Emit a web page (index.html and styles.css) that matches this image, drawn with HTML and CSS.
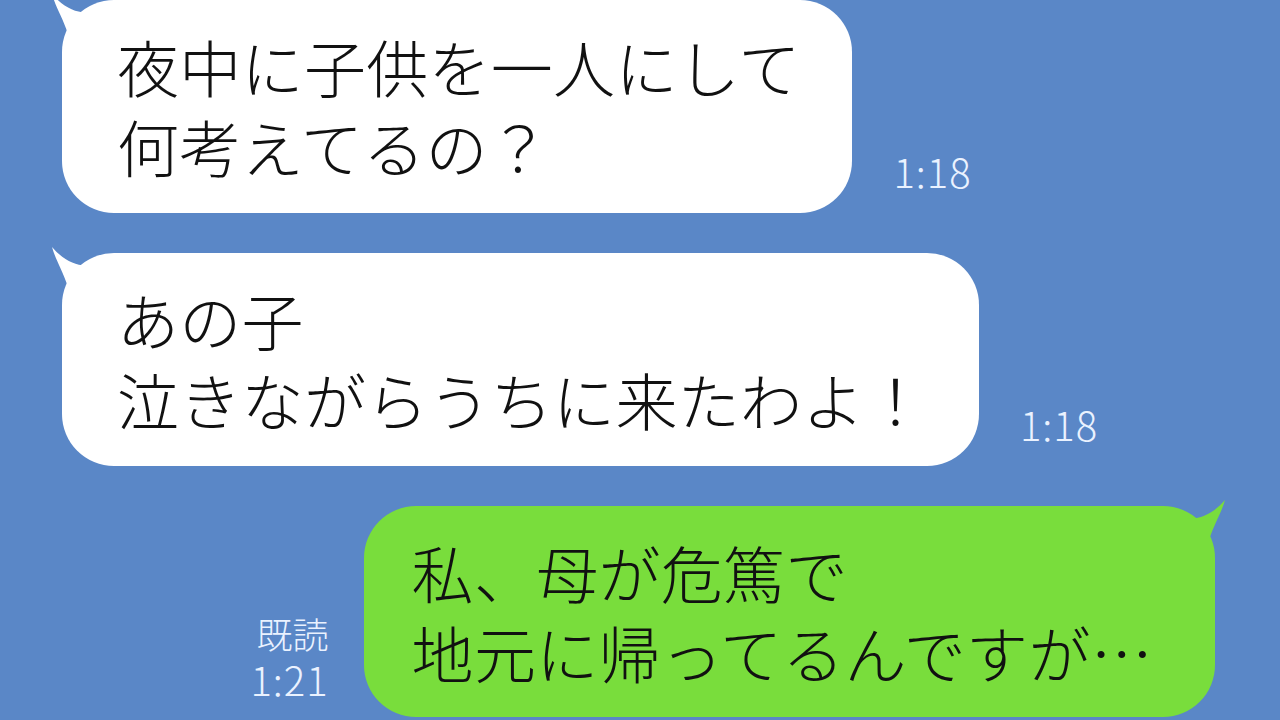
FILE: index.html
```html
<!DOCTYPE html>
<html lang="ja">
<head>
<meta charset="utf-8">
<link rel="stylesheet" href="styles.css">
</head>
<body>
<main class="chat">
  <div class="row row-in">
    <div class="bubble bubble-in">
      <svg class="tail tail-in" viewBox="0 0 40 40" width="40" height="40"><path d="M2 0 C6 14 12 22 18 40 L40 40 L40 18 C28 20 14 14 2 0 Z" fill="#fff"/></svg>
      <p class="msg">夜中に子供を一人にして<br>何考えてるの？</p>
    </div>
    <div class="meta"><span class="time">1:18</span></div>
  </div>
  <div class="row row-in">
    <div class="bubble bubble-in">
      <svg class="tail tail-in" viewBox="0 0 40 40" width="40" height="40"><path d="M2 0 C6 14 12 22 18 40 L40 40 L40 18 C28 20 14 14 2 0 Z" fill="#fff"/></svg>
      <p class="msg">あの子<br>泣きながらうちに来たわよ！</p>
    </div>
    <div class="meta"><span class="time">1:18</span></div>
  </div>
  <div class="row row-out">
    <div class="meta meta-out"><span class="read">既読</span><span class="time">1:21</span></div>
    <div class="bubble bubble-out">
      <svg class="tail tail-out" viewBox="0 0 40 40" width="40" height="40"><path d="M38 0 C34 14 28 22 22 40 L0 40 L0 18 C12 20 26 14 38 0 Z" fill="#79dd3c"/></svg>
      <p class="msg">私、母が危篤で<br>地元に帰ってるんですが…</p>
    </div>
  </div>
</main>
</body>
</html>
```
FILE: styles.css
```css
* { box-sizing: border-box; }
html, body {
  margin: 0;
  padding: 0;
  width: 1280px;
  height: 720px;
  overflow: hidden;
  background: #5a87c7;
  font-family: "Noto Sans CJK JP", "Noto Sans", sans-serif;
}
.chat {
  display: flex;
  flex-direction: column;
  gap: 40px;
}
.row {
  display: flex;
  align-items: flex-end;
}
.row-in { padding-left: 62px; }
.row-out {
  justify-content: flex-end;
  padding-right: 65px;
}
.bubble {
  position: relative;
  border-radius: 52px;
  padding: 26px 52px 27px 55px;
}
.bubble-in { background: #ffffff; }
.bubble-out {
  background: #79dd3c;
  padding: 26px 62px 25px 48px;
}
.msg {
  margin: 0;
  font-size: 62px;
  line-height: 80px;
  color: #111;
  white-space: nowrap;
  font-weight: 300;
  letter-spacing: 0.3px;
}
.tail {
  position: absolute;
  top: -6px;
}
.tail-in { left: -12px; }
.tail-out { right: -12px; }
.meta {
  display: flex;
  flex-direction: column;
  margin-left: 41px;
  margin-bottom: 18px;
  color: #eaf2ff;
  line-height: 1.2;
}
.meta-out {
  margin-left: 0;
  margin-right: 35px;
  align-items: flex-end;
  margin-bottom: 14px;
}
.time {
  font-size: 40px;
  font-weight: 300;
  letter-spacing: 1px;
}
.read {
  font-size: 36px;
  font-weight: 300;
}
```
